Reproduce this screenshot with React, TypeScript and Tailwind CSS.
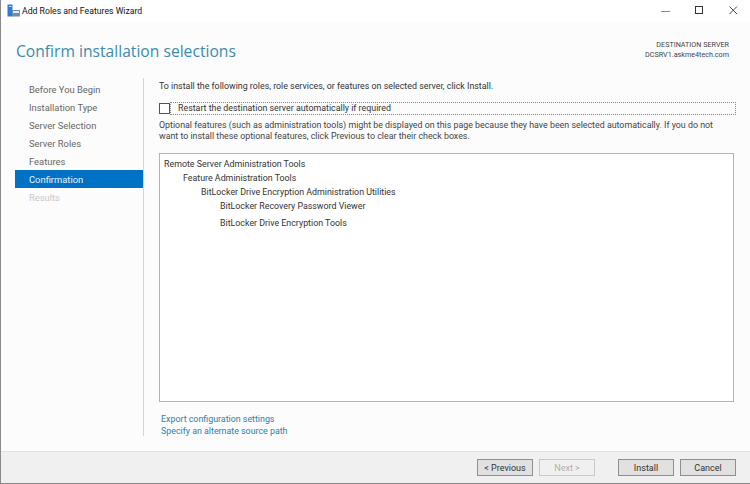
export default function App() {
  const steps = [
    { t: "Before You Begin", c: "text-[#666]" },
    { t: "Installation Type", c: "text-[#666]" },
    { t: "Server Selection", c: "text-[#666]" },
    { t: "Server Roles", c: "text-[#666]" },
    { t: "Features", c: "text-[#666]" },
    { t: "Confirmation", c: "bg-[#0072c6] text-[#e8f2fa]" },
    { t: "Results", c: "text-[#c8c8c8]" },
  ];
  return (
    <div className="w-[750px] h-[484px] flex flex-col overflow-hidden bg-white border-l border-b border-[#8a8a8a] text-[8.85px] leading-[14px] text-[#333] whitespace-nowrap [font-family:Roboto,sans-serif]">
      <div className="h-[22px] shrink-0 flex items-center bg-white pl-[6px]">
        <svg width="13" height="13" viewBox="0 0 13 13" className="mr-[2px] mb-[2px]">
          <rect x="0.5" y="0.5" width="5" height="12" fill="#2b7cd3" />
          <rect x="2" y="2" width="2.5" height="1" fill="#bfe0f7" />
          <rect x="5" y="6" width="8" height="6.5" fill="#6f8ea8" />
          <rect x="6" y="7" width="6" height="2" fill="#dfe9f1" />
        </svg>
        <span className="text-[#111] text-[8.7px]">Add Roles and Features Wizard</span>
        <div className="ml-auto flex items-center h-full">
          <svg width="12" height="12" viewBox="0 0 12 12" className="mr-[22px]"><path d="M1 6.5h9" stroke="#888" strokeWidth="1" /></svg>
          <svg width="12" height="12" viewBox="0 0 12 12" className="mr-[22px]"><rect x="1.5" y="1.5" width="7" height="7" fill="none" stroke="#333" strokeWidth="1" /></svg>
          <svg width="12" height="12" viewBox="0 0 12 12" className="mr-[10px]"><path d="M1.5 1.5l7.5 7.5M9 1.5l-7.5 7.5" stroke="#333" strokeWidth="0.9" /></svg>
        </div>
      </div>
      <div className="flex-1 flex flex-col bg-[#fcfcfc] min-h-0">
        <div className="h-[56px] shrink-0 flex justify-between pl-[15px] pr-[21px]">
          <h1 className="text-[15.65px] leading-[24px] mt-[17px] font-normal text-[#3b8bab] [font-family:'Open_Sans',sans-serif]">Confirm installation selections</h1>
          <div className="text-right text-[7.2px] leading-[10px] mt-[18px] text-[#444]">
            <div>DESTINATION SERVER</div>
            <div>DCSRV1.askme4tech.com</div>
          </div>
        </div>
        <div className="flex-1 flex min-h-0">
          <div className="w-[128px] shrink-0 ml-[14px] pt-[2px] text-[9.4px]">
            {steps.map((s) => (
              <div key={s.t} className={`h-[18px] pl-[14px] pt-[2px] flex items-center ${s.c}`}>{s.t}</div>
            ))}
          </div>
          <div className="w-[1px] bg-[#d4d4d4] mb-[15px]" />
          <div className="flex-1 min-w-0 pl-[15px] pr-[16px] flex flex-col pb-[14px]">
            <div className="mt-[1px]">To install the following roles, role services, or features on selected server, click Install.</div>
            <div className="h-[14px] mt-[8px] flex items-center -mr-[2px]">
              <div className="w-[11px] h-[11px] border border-[#555] bg-white shrink-0" />
              <div className="flex-1 min-w-0 h-[13px] pl-[7px] border border-dotted border-[#888] flex items-center text-[#333]">Restart the destination server automatically if required</div>
            </div>
            <div className="mt-[5px] leading-[11px] text-[#444]">
              <div>Optional features (such as administration tools) might be displayed on this page because they have been selected automatically. If you do not</div>
              <div>want to install these optional features, click Previous to clear their check boxes.</div>
            </div>
            <div className="mt-[11px] flex-1 border border-[#b4b4b4] bg-white pt-[3px] pl-[4px] text-[#333]">
              <div className="h-[14px]">Remote Server Administration Tools</div>
              <div className="h-[14px] pl-[19px]">Feature Administration Tools</div>
              <div className="h-[14px] pl-[37px]">BitLocker Drive Encryption Administration Utilities</div>
              <div className="h-[14px] pl-[56px]">BitLocker Recovery Password Viewer</div>
              <div className="h-[14px] pl-[56px] mt-[3px]">BitLocker Drive Encryption Tools</div>
            </div>
            <div className="mt-[11px] pl-[2px] text-[#2a82a8] leading-[12px]">
              <div>Export configuration settings</div>
              <div>Specify an alternate source path</div>
            </div>
          </div>
        </div>
        <div className="h-[32px] shrink-0 bg-[#f0f0f0] border-t border-[#e2e2e2] flex items-start justify-end pt-[7px] pr-[14px]">
          <button className="w-[56px] h-[17px] border border-[#8f8f8f] bg-[#e1e1e1] text-[#333] text-[9px] flex items-center justify-center">&lt; Previous</button>
          <button className="w-[56px] h-[17px] ml-[6px] border border-[#c8c8c8] bg-[#f0f0f0] text-[#b0b0b0] text-[9px] flex items-center justify-center">Next &gt;</button>
          <button className="w-[56px] h-[17px] ml-[23px] border border-[#8f8f8f] bg-[#e1e1e1] text-[#333] text-[9px] flex items-center justify-center">Install</button>
          <button className="w-[56px] h-[17px] ml-[6px] border border-[#8f8f8f] bg-[#e1e1e1] text-[#333] text-[9px] flex items-center justify-center">Cancel</button>
        </div>
      </div>
    </div>
  );
}
